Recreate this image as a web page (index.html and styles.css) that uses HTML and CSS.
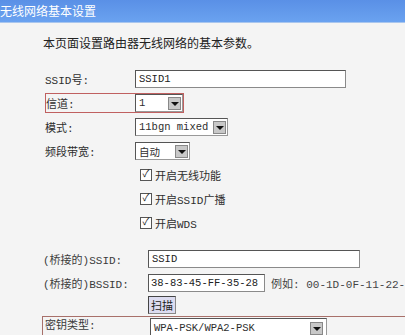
FILE: index.html
```html
<!DOCTYPE html>
<html lang="zh-CN">
  <head>
    <meta charset="UTF-8" />
    <title>无线网络基本设置</title>
    <link rel="stylesheet" href="styles.css">
  </head>
  <body>
    <div class="header">无线网络基本设置</div>
    <div class="content">
      <p class="intro">本页面设置路由器无线网络的基本参数。</p>

      <div class="form basic">
        <div class="row">
          <span class="lbl">SSID号:</span>
          <input class="field ssid" type="text" value="SSID1" title="SSID号" />
        </div>
        <div class="row">
          <div class="marked">
            <span class="lbl">信道:</span>
            <div class="pick w-channel"><span>1</span><i class="arrow"></i></div>
          </div>
        </div>
        <div class="row">
          <span class="lbl">模式:</span>
          <div class="pick w-mode"><span>11bgn mixed</span><i class="arrow"></i></div>
        </div>
        <div class="row">
          <span class="lbl">频段带宽:</span>
          <div class="pick w-band"><span>自动</span><i class="arrow"></i></div>
        </div>
        <div class="row check">
          <span class="box">&#10003;</span><span>开启无线功能</span>
        </div>
        <div class="row check">
          <span class="box">&#10003;</span><span>开启SSID广播</span>
        </div>
        <div class="row check">
          <span class="box">&#10003;</span><span>开启WDS</span>
        </div>
      </div>

      <div class="form bridge">
        <div class="row">
          <span class="lbl">(桥接的)SSID:</span>
          <input class="field bssid-name" type="text" value="SSID" title="桥接的SSID" />
        </div>
        <div class="row">
          <span class="lbl">(桥接的)BSSID:</span>
          <input class="field mac" type="text" value="38-83-45-FF-35-28" title="桥接的BSSID" />
          <span class="hint">例如: 00-1D-0F-11-22-33</span>
        </div>
        <div class="row short">
          <span class="lbl"></span>
          <button class="scan">扫描</button>
        </div>
        <div class="marked key">
          <span class="lbl">密钥类型:</span>
          <div class="pick w-key"><span>WPA-PSK/WPA2-PSK</span><i class="arrow"></i></div>
        </div>
      </div>
    </div>
  </body>
</html>
```

FILE: styles.css
```css
body {
  margin: 0;
  background-color: #f4f4f4;
  font-family: "Liberation Mono", "Noto Sans CJK SC", monospace;
  font-size: 11px;
  color: #2e2e2e;
  overflow: hidden;
  width: 405px;
  height: 335px;
}

.header {
  height: 22px;
  line-height: 22px;
  background: linear-gradient(#5a90e6, #6aa2f0);
  border-bottom: 1px solid #a9c6ee;
  color: #fff;
  font-family: "Noto Sans CJK SC", sans-serif;
  font-size: 12px;
  white-space: nowrap;
}

.content {
  padding-left: 43px;
}

.intro {
  margin: 15px 0 15px 0;
  height: 14px;
  line-height: 14px;
  font-size: 12px;
  color: #222;
}

.row {
  display: flex;
  align-items: center;
  height: 24px;
  white-space: nowrap;
}

.basic {
  padding-left: 2px;
}

.basic .lbl {
  width: 90px;
}

.bridge {
  margin-top: 12px;
}

.bridge .lbl {
  width: 105px;
  color: #3a3a3a;
}

.lbl {
  flex-shrink: 0;
}

/* text fields */
.field {
  box-sizing: border-box;
  height: 18px;
  padding: 0 3px;
  margin: 0;
  font-family: inherit;
  font-size: 10.5px;
  color: #222;
  background-color: #fff;
  border: 1px solid #8a8a8a;
  border-top-color: #555;
  border-left-color: #555;
}

.ssid {
  width: 211px;
}

.bssid-name {
  width: 212px;
}

.mac {
  width: 117px;
  padding: 0 2px;
}

.hint {
  margin-left: 6px;
  color: #444;
}

/* fake select boxes */
.pick {
  box-sizing: border-box;
  display: flex;
  align-items: center;
  justify-content: space-between;
  height: 18px;
  padding: 0 1px 0 3px;
  font-size: 10.5px;
  background-color: #fff;
  border: 1px solid #555;
  border-right-color: #999;
  border-bottom-color: #999;
}

.w-channel {
  width: 48px;
}

.w-mode {
  width: 93px;
}

.w-band {
  width: 55px;
}

.w-key {
  width: 177px;
  padding-right: 3px;
}

.arrow {
  position: relative;
  flex-shrink: 0;
  width: 13px;
  height: 13px;
  background-color: #c8c8c8;
  border: 1px solid #888;
  box-sizing: border-box;
}

.arrow::after {
  content: "";
  position: absolute;
  left: 2px;
  top: 4px;
  border-left: 4px solid transparent;
  border-right: 4px solid transparent;
  border-top: 4px solid #111;
}

/* red annotation boxes */
.marked {
  display: flex;
  align-items: center;
  height: 20px;
  border: 1px solid #c06060;
  box-sizing: border-box;
}

.marked .lbl {
  width: 89px;
}

.key {
  margin-top: 2px;
  margin-left: -1px;
  width: 400px;
  height: 24px;
  border-color: #a8706a;
  align-items: flex-start;
  padding-top: 1px;
}

.key .lbl {
  width: 105px;
  padding-left: 2px;
  line-height: 17px;
}

.key .pick {
  height: 20px;
}

/* checkboxes */
.check {
  padding-left: 95px;
}

.box {
  box-sizing: border-box;
  width: 12px;
  height: 12px;
  margin-right: 3px;
  border: 1px solid #555;
  background-color: #fff;
  font-size: 10px;
  line-height: 10px;
  text-align: center;
  color: #111;
}

.short {
  height: 19px;
}

.scan {
  height: 18px;
  padding: 0 2px;
  font-family: "Noto Sans CJK SC", sans-serif;
  font-size: 11px;
  color: #222;
  background-color: #dcdcf0;
  border: 1px solid #444;
  border-right-color: #888;
  border-bottom-color: #888;
}
```
